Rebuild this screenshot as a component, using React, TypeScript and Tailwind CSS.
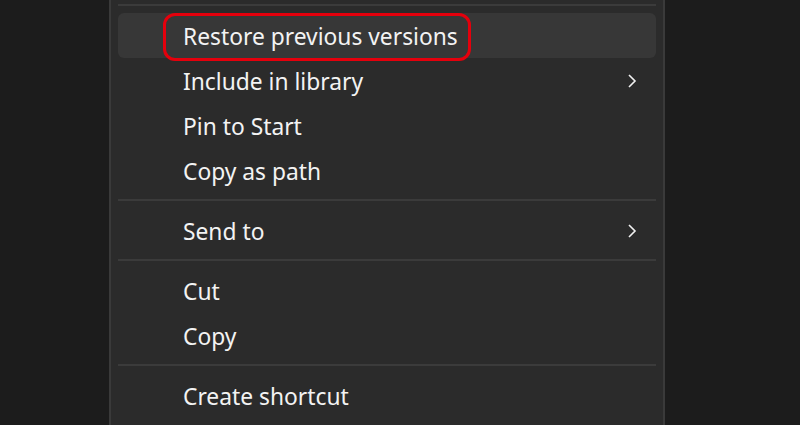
import React from 'react'

type Item = { label: string; sub?: boolean; active?: boolean } | 'sep'

const items: Item[] = [
  { label: 'Restore previous versions', active: true },
  { label: 'Include in library', sub: true },
  { label: 'Pin to Start' },
  { label: 'Copy as path' },
  'sep',
  { label: 'Send to', sub: true },
  'sep',
  { label: 'Cut' },
  { label: 'Copy' },
  'sep',
  { label: 'Create shortcut' },
]

function Chevron() {
  return (
    <svg width="10" height="16" viewBox="0 0 10 16" className="absolute right-[19px] top-1/2 -translate-y-1/2">
      <polyline points="2,2 8,8 2,14" fill="none" stroke="#f2f2f2" strokeWidth="1.6" />
    </svg>
  )
}

export default function App() {
  return (
    <div className="w-[800px] h-[425px] overflow-hidden bg-[#1c1c1c] flex" style={{ fontFamily: '"Noto Sans", "Open Sans", sans-serif' }}>
      <div className="ml-[109px] w-[556px] h-full bg-[#2b2b2b] border-x-2 border-x-[#3a3a3a] px-[7px]">
        <div className="mt-[4px] mb-[7px] h-[2px] bg-[#3b3b3b]" />
        {items.map((item, i) =>
          item === 'sep' ? (
            <div key={i} className="mt-[6px] mb-[7px] h-[2px] bg-[#3b3b3b]" />
          ) : (
            <div
              key={i}
              className={`relative h-[45px] flex items-center pl-[65px] pt-[3px] text-[22.8px] text-[#f3f3f3] rounded-[6px] ${item.active ? 'bg-[#373737]' : ''}`}
            >
              <span>{item.label}</span>
              {item.sub && <Chevron />}
              {item.active && (
                <div className="absolute left-[45px] top-0 w-[308px] h-[48px] border-[3px] border-[#e5000c] rounded-[12px]" />
              )}
            </div>
          )
        )}
      </div>
    </div>
  )
}
